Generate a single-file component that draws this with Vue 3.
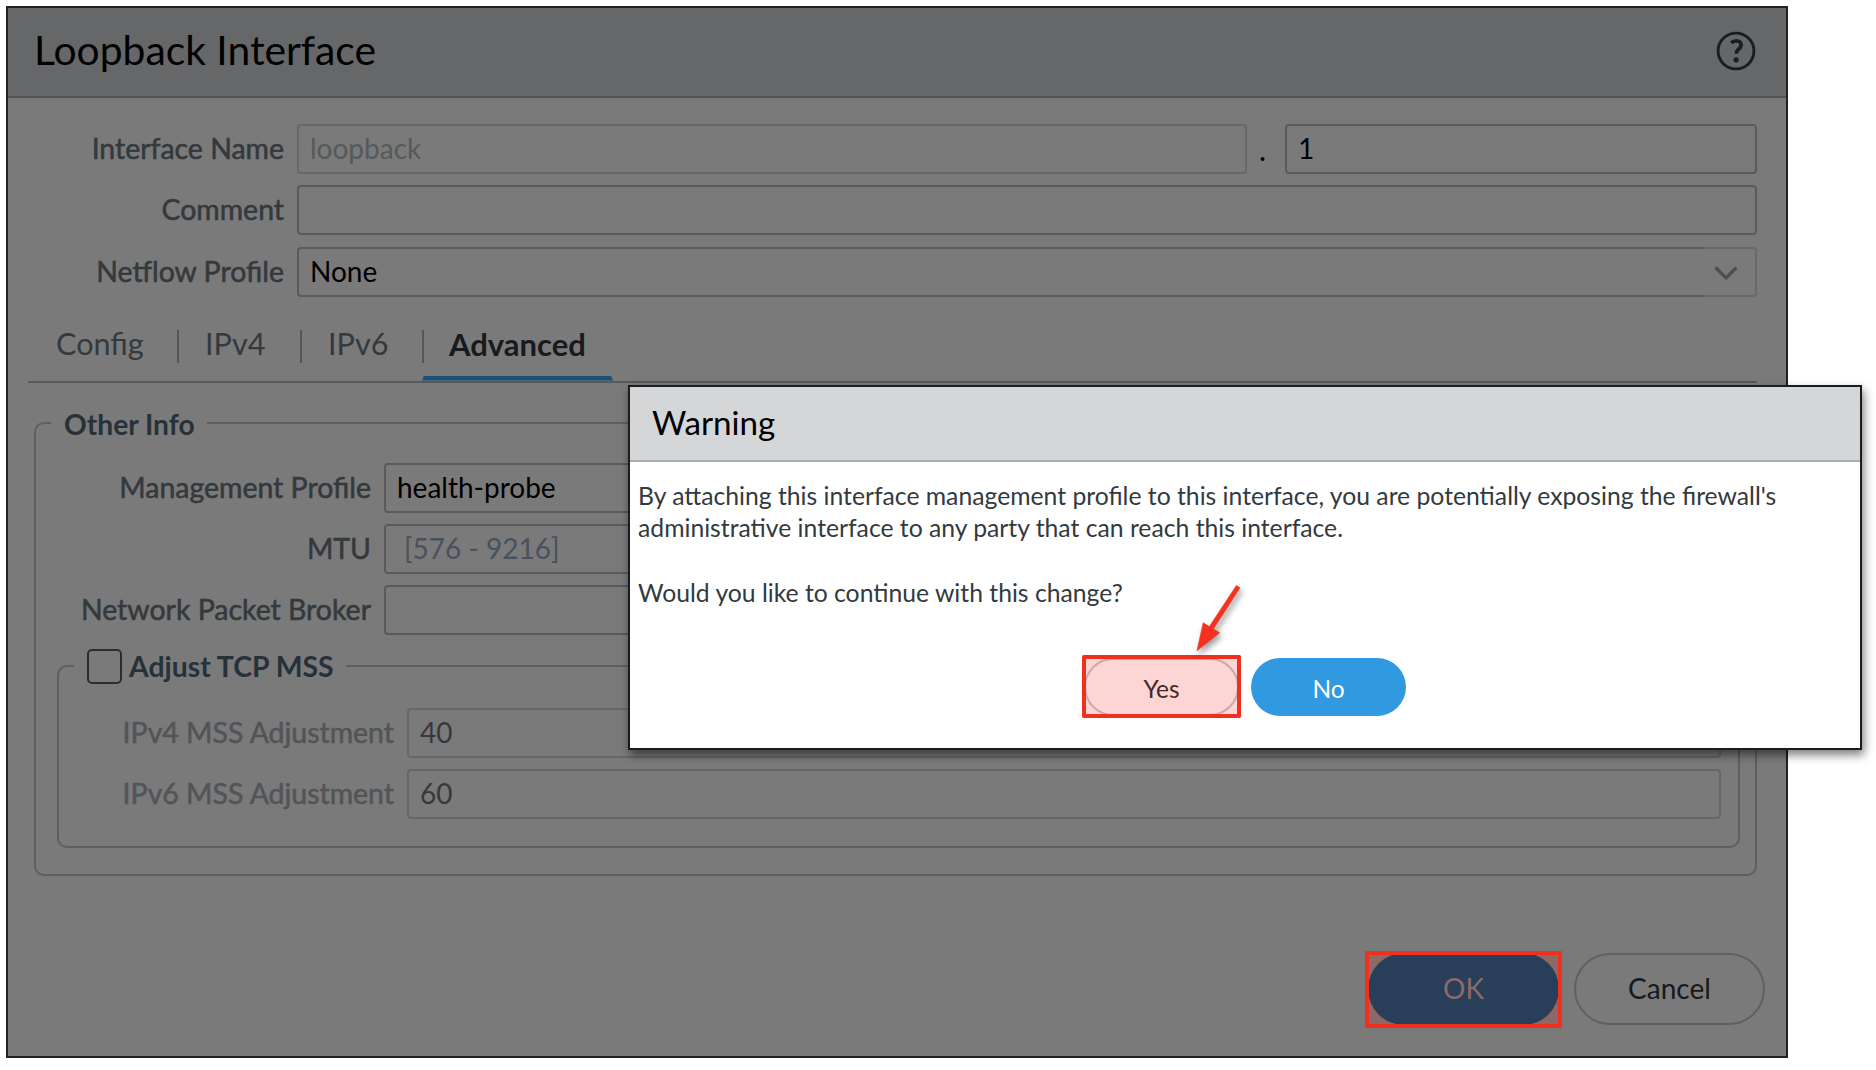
<script setup>
const tabs = ['Config', 'IPv4', 'IPv6', 'Advanced']
const active = 'Advanced'
</script>

<template>
  <div class="screen">
    <section class="window">
      <header class="window-head">
        <h1>Loopback Interface</h1>
        <svg class="help" viewBox="0 0 40 40" width="40" height="40" fill="none">
          <circle cx="20" cy="20" r="17.9" stroke="#1b1c1d" stroke-width="2.9" />
          <path d="M15.3 11.9c1.5-1.4 3-2 4.9-2 3 0 4.9 1.6 4.9 4.1 0 4.2-4.7 3.9-4.9 8.6" stroke="#1b1c1d" stroke-width="3.8" />
          <circle cx="20.1" cy="28.8" r="2.6" fill="#1b1c1d" />
        </svg>
      </header>

      <div class="form">
        <div class="row">
          <label>Interface Name</label>
          <div class="field disabled name">loopback</div>
          <span class="dot">.</span>
          <div class="field unit">1</div>
        </div>
        <div class="row">
          <label>Comment</label>
          <div class="field"></div>
        </div>
        <div class="row">
          <label>Netflow Profile</label>
          <div class="combo">
            <div class="field">None</div>
            <div class="trigger">
              <svg viewBox="0 0 26 18" width="26" height="18" fill="none">
                <path d="M2.5 3.5 13 14 23.5 3.5" stroke="#4c5053" stroke-width="3.2" />
              </svg>
            </div>
          </div>
        </div>
      </div>

      <nav class="tabs">
        <div v-for="t in tabs" :key="t" class="tab" :class="[t.toLowerCase(), { active: t === active }]">
          <span>{{ t }}</span>
        </div>
      </nav>

      <div class="group outer">
        <div class="legend"><i class="lead"></i><b>Other Info</b><i class="rest"></i></div>
        <div class="group-body">
          <div class="row"><label>Management Profile</label><div class="field">health-probe</div></div>
          <div class="row"><label>MTU</label><div class="field hint">[576 - 9216]</div></div>
          <div class="row"><label>Network Packet Broker</label><div class="field"></div></div>
        </div>
        <div class="group inner">
          <div class="legend"><i class="lead"></i><span class="check"></span><b>Adjust TCP MSS</b><i class="rest"></i></div>
          <div class="group-body">
            <div class="row muted"><label>IPv4 MSS Adjustment</label><div class="field disabled">40</div></div>
            <div class="row muted"><label>IPv6 MSS Adjustment</label><div class="field disabled">60</div></div>
          </div>
        </div>
      </div>

      <footer class="window-foot">
        <div class="marked marked-ok"><div class="btn ok">OK</div></div>
        <div class="btn cancel">Cancel</div>
      </footer>
    </section>

    <section class="dialog">
      <header><h2>Warning</h2></header>
      <div class="message">
        <p>By attaching this interface management profile to this interface, you are potentially exposing the firewall's<br>administrative interface to any party that can reach this interface.</p>
        <p>Would you like to continue with this change?</p>
      </div>
      <div class="actions">
        <div class="marked marked-yes"><div class="btn yes">Yes</div></div>
        <div class="btn no">No</div>
      </div>
    </section>

    <svg class="arrow" viewBox="0 0 60 80" width="60" height="80">
      <path d="M46.4 1.4 50 3.8 23.4 44.9 29.6 48.7 7 66.8 13.2 38.7 19.4 42.6Z" fill="#f5301e" stroke="#f5301e" stroke-width=".6" />
    </svg>
  </div>
</template>

<style>
body { background: #fff; overflow: hidden; }
</style>

<style scoped>
* { box-sizing: border-box; }
.screen {
  position: relative;
  width: 1876px;
  height: 1070px;
  padding: 6px;
  background: #fff;
  font-family: Lato, "Open Sans", sans-serif;
  font-size: 28px;
  color: #000;
  overflow: hidden;
}
.window {
  display: flex;
  flex-direction: column;
  width: 1782px;
  height: 1052px;
  border: 2px solid #202122;
  background: #7a7a7a;
}
.window-head {
  display: flex;
  align-items: center;
  justify-content: space-between;
  flex: none;
  height: 90px;
  padding: 0 30px 4px 26px;
  border-bottom: 2px solid #50555a;
  background: #666768;
}
h1 { margin: 0; font-size: 40.8px; font-weight: 400; line-height: 48px; }
.help { display: block; margin-top: 2px; }

.form { display: flex; flex-direction: column; gap: 11.3px; padding: 26px 29px 0 0; }
.row { display: flex; align-items: center; height: 50px; }
.row label {
  flex: none;
  width: 276px;
  margin: -2px 13px 0 0;
  text-align: right;
  font-size: 28.45px;
  -webkit-text-stroke: .55px currentColor;
  color: #34393d;
  white-space: nowrap;
}
.field {
  flex: 1;
  height: 50px;
  padding-left: 11px;
  border: 2px solid #585b5c;
  border-radius: 4px;
  line-height: 44px;
  white-space: nowrap;
}
.field.disabled { border-color: #646867; color: #55595a; }
.field.name { flex: none; width: 950px; }
.field.unit { flex: 1; }
.dot { width: 38px; padding-left: 12px; font-size: 30px; }
.combo { display: flex; flex: 1; }
.combo .field { border-right: 0; border-radius: 4px 0 0 4px; }
.trigger {
  display: flex;
  align-items: center;
  width: 52px;
  height: 50px;
  padding: 2px 0 0 8px;
  border: 2px solid #656968;
  border-left: 0;
  border-radius: 0 4px 4px 0;
}

.tabs {
  display: flex;
  flex: none;
  height: 66px;
  margin: 20px 29px 0 20px;
  border-bottom: 2px solid #575a5a;
  font-size: 30.6px;
  color: #34393d;
}
.tab { position: relative; display: flex; height: 64px; padding-top: 8px; line-height: 38px; white-space: nowrap; }
.tab.config { width: 149px; padding-left: 28px; }
.tab.ipv4 { width: 123px; padding-left: 28px; }
.tab.ipv6 { width: 122px; padding-left: 28px; }
.tab.advanced { width: 191px; padding-left: 27px; font-size: 31px; font-weight: 700; color: #181b1e; }
.tab + .tab::before { content: ""; position: absolute; left: 0; top: 13px; width: 2px; height: 33px; background: #50585c; }
.tab.active::after {
  content: "";
  position: absolute;
  left: 0;
  right: 0;
  bottom: 0;
  height: 5px;
  background: #1b5176;
  clip-path: polygon(2px 0, 189px 0, 100% 100%, 0 100%);
}

.group { position: relative; }
.legend { position: relative; display: flex; align-items: center; height: 40px; margin-top: -20px; padding: 0 2px; font-size: 28.2px; color: #27313a; }
.legend b { font-weight: 700; white-space: nowrap; }
.legend .lead { flex: none; width: 17px; height: 10px; border-top: 2px solid #5d6060; border-left: 2px solid #5d6060; border-radius: 10px 0 0 0; margin: 8px 0 0 -2px; }
.legend .rest { flex: 1; height: 10px; border-top: 2px solid #5d6060; border-right: 2px solid #5d6060; border-radius: 0 10px 0 0; margin: 8px -2px 0 0; }
.group::before {
  content: "";
  position: absolute;
  left: 0;
  right: 0;
  top: 9px;
  bottom: 0;
  border: 2px solid #5d6060;
  border-top: 0;
  border-radius: 0 0 10px 10px;
}
.outer { flex: none; width: 1723px; height: 453px; margin: 40px 0 0 26px; }
.outer > .legend b { margin: 3px 12px 0 13px; }
.outer > .group-body { display: flex; flex-direction: column; gap: 11.2px; padding: 20.5px 18px 0 0; }
.outer > .group-body label { width: 337px; }
.hint.field { padding-left: 18px; color: #47525c; }
.inner { display: flow-root; width: 1683px; height: 182px; margin: 30.4px 0 0 23px; }
.inner > .legend b { margin: 1px 12px 0 7px; font-size: 28.4px; }
.check { width: 35px; height: 35px; margin: 1px 0 0 13px; border: 2px solid #2b2e30; border-radius: 5px; }
.inner > .group-body { display: flex; flex-direction: column; gap: 11.2px; padding: 22px 19px 0 0; }
.inner > .group-body label { width: 337px; }
.row.muted label { color: #515558; }
.muted .field.disabled { color: #36393b; border-color: #656868; }

.window-foot { display: flex; gap: 14px; justify-content: flex-end; margin-top: 77.5px; padding-right: 21px; }
.btn { display: flex; align-items: center; justify-content: center; }
.window-foot .btn { width: 191px; height: 72px; border-radius: 36px; padding-bottom: 2px; }
.window-foot .ok { background: #293f59; color: #8d6a68; }
.cancel { border: 2px solid #5d6261; color: #17191c; }

/* highlight frame: tint behind the rounded button, outline above it */
.marked { position: relative; isolation: isolate; }
.marked::before, .marked::after { content: ""; position: absolute; }
.marked::before { z-index: -1; }
.marked::after { border: 4px solid #f0301f; border-radius: 2px; }
.marked-ok { margin-right: 1px; }
.marked-ok::before, .marked-ok::after { inset: -2px -3px -3px -3px; }
.marked-ok::before { background: #8d6865; }
.marked-yes::before, .marked-yes::after { inset: -3px -2px -2px -2px; }
.marked-yes::before { background: #fcd5d4; }

.dialog {
  position: absolute;
  left: 628px;
  top: 385px;
  width: 1234px;
  height: 365px;
  border: 2px solid #1b1c1d;
  background: #fff;
  box-shadow: 2px 5px 9px rgba(0, 0, 0, .5);
}
.dialog header { height: 75px; padding: 14px 0 0 22px; border-bottom: 2px solid #a9acad; background: #d5d6d8; }
h2 { margin: 0; font-size: 33.2px; font-weight: 400; line-height: 42px; }
.message { padding: 18px 0 0 8px; font-size: 24.73px; line-height: 32.4px; color: #323a40; white-space: nowrap; }
.message p { margin: 0 0 32px; }
.actions { display: flex; gap: 12px; margin: 49px 0 0 454px; font-size: 24.5px; }
.actions .btn { width: 155px; height: 58px; border-radius: 29px; padding-top: 3px; }
.actions .yes { padding-top: 2px; border: 2px solid #c9abaa; background: #fcd5d4; color: #45292d; }
.no { background: #3199e0; color: #fff; }
.arrow { position: absolute; left: 1190px; top: 584px; filter: drop-shadow(2px 4px 3px rgba(0, 0, 0, .4)); }
</style>
